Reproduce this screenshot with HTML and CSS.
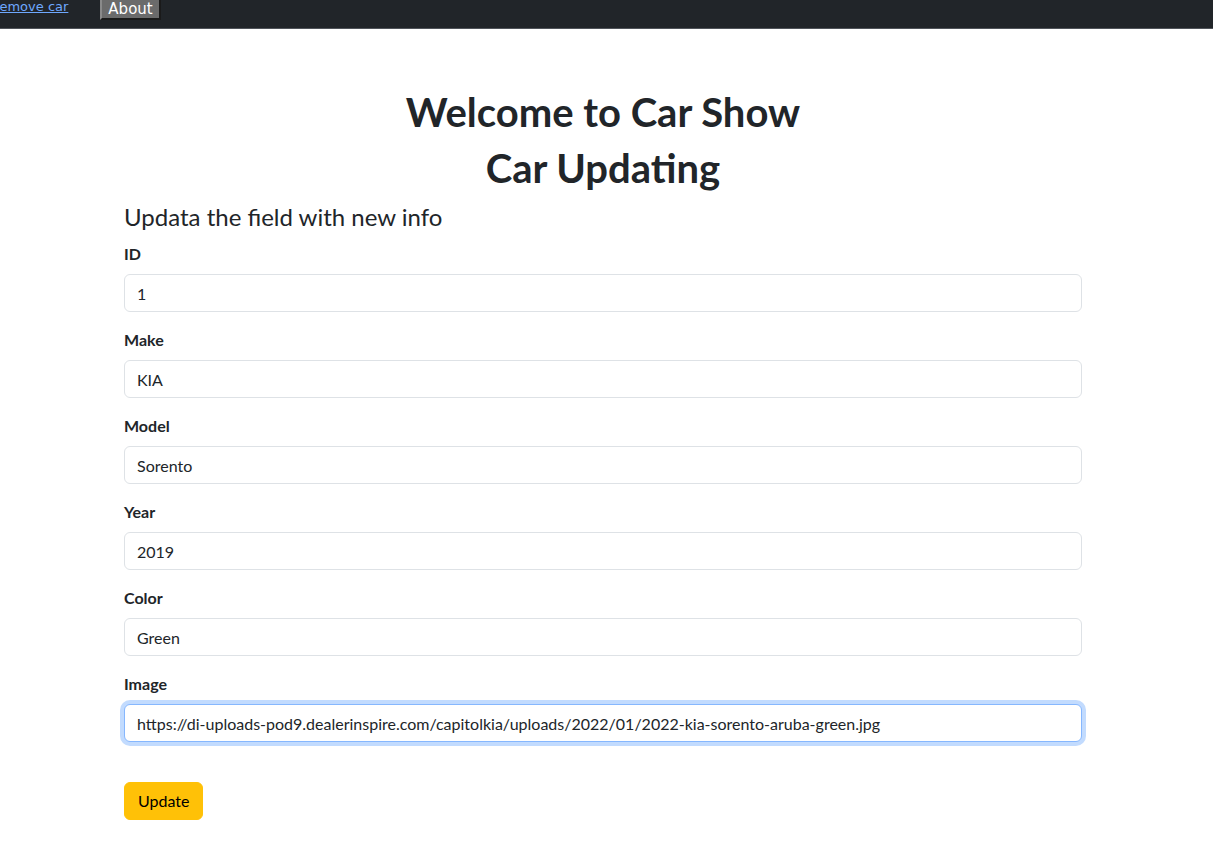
FILE: index.html
```html
<!DOCTYPE html>
<html lang="en">
<head>
<meta charset="utf-8">
<title>Car Show</title>
<link rel="stylesheet" href="styles.css">
</head>
<body>
<nav class="topbar">
  <div class="topbar-inner">
    <a class="nav-link" href="#">Remove car</a>
    <button class="nav-btn" type="button">About</button>
  </div>
</nav>
<main class="page">
  <h1 class="title">Welcome to Car Show</h1>
  <h1 class="title">Car Updating</h1>
  <h4 class="subtitle">Updata the field with new info</h4>
  <form class="car-form">
    <div class="field">
      <label class="field-label">ID</label>
      <input class="field-input" type="text" value="1">
    </div>
    <div class="field">
      <label class="field-label">Make</label>
      <input class="field-input" type="text" value="KIA">
    </div>
    <div class="field">
      <label class="field-label">Model</label>
      <input class="field-input" type="text" value="Sorento">
    </div>
    <div class="field">
      <label class="field-label">Year</label>
      <input class="field-input" type="text" value="2019">
    </div>
    <div class="field">
      <label class="field-label">Color</label>
      <input class="field-input" type="text" value="Green">
    </div>
    <div class="field">
      <label class="field-label">Image</label>
      <input class="field-input is-focused" type="text" value="https://di-uploads-pod9.dealerinspire.com/capitolkia/uploads/2022/01/2022-kia-sorento-aruba-green.jpg">
    </div>
    <button class="btn-update" type="button">Update</button>
  </form>
</main>
</body>
</html>
```
FILE: styles.css
```css
* { box-sizing: border-box; }
html, body { margin: 0; padding: 0; background: #fff; }
body {
  font-family: Lato, "Segoe UI", "Noto Sans", sans-serif;
  color: #212529;
  font-size: 16px;
  line-height: 1.5;
}
.topbar {
  height: 29px;
  background: #212529;
  border-bottom: 1px solid #50545a;
  overflow: hidden;
}
.topbar-inner {
  display: flex;
  align-items: flex-start;
  gap: 32px;
  margin-top: -9px;
  margin-left: -9px;
}
.nav-link {
  font-family: "DejaVu Sans", Verdana, sans-serif;
  font-size: 13px;
  color: #6ea8fe;
  text-decoration: underline;
  line-height: 24px;
  margin-top: 4px;
}
.nav-btn {
  font-family: "DejaVu Sans", Verdana, sans-serif;
  font-size: 15px;
  line-height: 20px;
  color: #fff;
  background: #6b6b6b;
  border: 2px solid;
  border-color: #8a8a8a #1a1a1a #1a1a1a #8a8a8a;
  padding: 6px 6px 1px;
  height: 29px;
}
.page {
  width: 958px;
  margin: 0 0 0 124px;
  padding-top: 59px;
}
.title {
  text-align: center;
  font-size: 40px;
  font-weight: 700;
  line-height: 48px;
  margin: 0 0 8px;
}
.subtitle {
  font-size: 24px;
  font-weight: 400;
  line-height: 29px;
  margin: 10px 0 11px;
}
.field { margin-bottom: 16px; }
.field-label {
  display: block;
  font-weight: 700;
  font-size: 16px;
  line-height: 24px;
  margin-bottom: 8px;
}
.field-input {
  display: block;
  width: 100%;
  height: 38px;
  padding: 6px 12px;
  font-family: inherit;
  font-size: 16px;
  line-height: 24px;
  color: #212529;
  background: #fff;
  border: 1px solid #dee2e6;
  border-radius: 6px;
  outline: none;
}
.field-input.is-focused {
  border-color: #86b7fe;
  box-shadow: 0 0 0 4px rgba(13, 110, 253, 0.25);
}
.btn-update {
  margin-top: 24px;
  height: 38px;
  padding: 6px 13px;
  font-family: inherit;
  font-size: 16px;
  line-height: 24px;
  color: #000;
  background: #ffc107;
  border: 1px solid #ffc107;
  border-radius: 6px;
}
```
